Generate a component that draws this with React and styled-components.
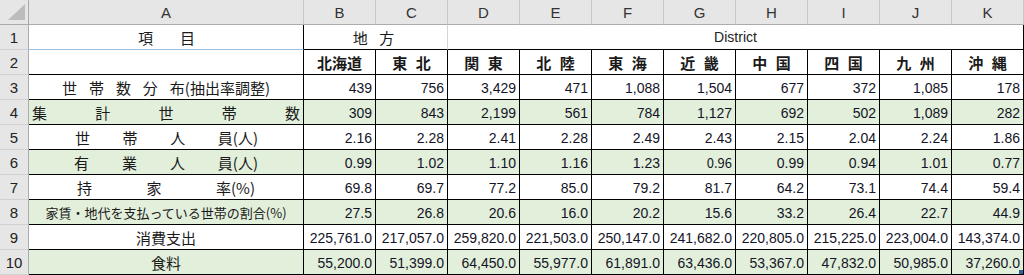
import React from 'react'
import styled, { createGlobalStyle } from 'styled-components'

const GREEN = '#e2efda'
const LINE = '#000'
const HEAD_BG = '#e6e6e6'

const GlobalStyle = createGlobalStyle`
  html, body {
    margin: 0;
    padding: 0;
    background: #fff;
  }
  * {
    box-sizing: border-box;
  }
`

const Sheet = styled.div`
  position: relative;
  display: grid;
  grid-template-columns: 29px 275px repeat(10, 72px);
  grid-template-rows: repeat(11, 25px);
  width: 1024px;
  font-family: "Noto Sans CJK JP", "Liberation Sans", sans-serif;
  color: #1a1a1a;
`

const Corner = styled.div`
  background: ${HEAD_BG};
  border-right: 1px solid #ababab;
  border-bottom: 1px solid #ababab;
  display: flex;
  align-items: flex-end;
  justify-content: flex-end;
  padding: 0 3px 4px 0;
`

const ColHead = styled.div`
  background: ${HEAD_BG};
  border-right: 1px solid #c8c8c8;
  border-bottom: 1px solid #ababab;
  display: flex;
  align-items: center;
  justify-content: center;
  font-family: "Liberation Sans", sans-serif;
  font-size: 15px;
  color: #333;
`

const RowHead = styled.div`
  background: ${HEAD_BG};
  border-right: 1px solid #ababab;
  border-bottom: 1px solid #d0d0d0;
  display: flex;
  align-items: center;
  justify-content: center;
  font-family: "Liberation Sans", sans-serif;
  font-size: 15px;
  color: #222;
`

const Cell = styled.div`
  background: ${(p) => (p.$fill ? GREEN : '#fff')};
  border-right: 1px solid ${(p) => p.$rightLine || LINE};
  border-bottom: 1px solid ${(p) => p.$bottomLine || LINE};
  grid-column: ${(p) => p.$span || 'auto'};
  display: flex;
  align-items: center;
  justify-content: ${(p) => p.$justify || 'center'};
  padding: ${(p) => p.$pad || '0'};
  font-size: ${(p) => p.$size || '15px'};
  font-weight: ${(p) => (p.$bold ? 700 : 400)};
  word-spacing: ${(p) => p.$wordGap || 'normal'};
  white-space: nowrap;
  overflow: hidden;
`

const LatinCell = styled(Cell)`
  font-family: "Liberation Sans", sans-serif;
  font-size: 14px;
  color: #222;
`

const NumCell = styled.div`
  background: ${(p) => (p.$fill ? GREEN : '#fff')};
  border-right: 1px solid ${LINE};
  border-bottom: 1px solid ${LINE};
  display: flex;
  align-items: center;
  justify-content: flex-end;
  padding: 1px 3px 0 0;
  font-family: ${(p) => (p.$alt ? '"Noto Sans CJK JP", sans-serif' : '"Liberation Sans", sans-serif')};
  font-size: ${(p) => (p.$alt ? '13px' : '14px')};
  color: #141428;
  white-space: nowrap;
`

const FillHandle = styled.div`
  position: absolute;
  right: 1px;
  bottom: 1px;
  width: 4px;
  height: 4px;
  background: #2f5f98;
`

const COLS = ['A', 'B', 'C', 'D', 'E', 'F', 'G', 'H', 'I', 'J', 'K']

const REGIONS = ['北海道', '東 北', '関 東', '北 陸', '東 海', '近 畿', '中 国', '四 国', '九 州', '沖 縄']

const ROWS = [
  {
    parts: ['世', '帯', '数', '分', '布(抽出率調整)'],
    pad: '0 33px 0 33px',
    values: ['439', '756', '3,429', '471', '1,088', '1,504', '677', '372', '1,085', '178'],
  },
  {
    parts: ['集', '計', '世', '帯', '数'],
    pad: '0 3px 0 3px',
    fill: true,
    values: ['309', '843', '2,199', '561', '784', '1,127', '692', '502', '1,089', '282'],
  },
  {
    parts: ['世', '帯', '人', '員(人)'],
    pad: '0 45px 0 46px',
    values: ['2.16', '2.28', '2.41', '2.28', '2.49', '2.43', '2.15', '2.04', '2.24', '1.86'],
  },
  {
    parts: ['有', '業', '人', '員(人)'],
    pad: '0 45px 0 45px',
    fill: true,
    values: ['0.99', '1.02', '1.10', '1.16', '1.23', '0.96', '0.99', '0.94', '1.01', '0.77'],
    alt: 5,
  },
  {
    parts: ['持', '家', '率(%)'],
    pad: '0 48px 0 48px',
    values: ['69.8', '69.7', '77.2', '85.0', '79.2', '81.7', '64.2', '73.1', '74.4', '59.4'],
  },
  {
    label: '家賃・地代を支払っている世帯の割合(%)',
    size: '13px',
    fill: true,
    values: ['27.5', '26.8', '20.6', '16.0', '20.2', '15.6', '33.2', '26.4', '22.7', '44.9'],
  },
  {
    label: '消費支出',
    values: ['225,761.0', '217,057.0', '259,820.0', '221,503.0', '250,147.0', '241,682.0', '220,805.0', '215,225.0', '223,004.0', '143,374.0'],
  },
  {
    label: '食料',
    fill: true,
    values: ['55,200.0', '51,399.0', '64,450.0', '55,977.0', '61,891.0', '63,436.0', '53,367.0', '47,832.0', '50,985.0', '37,260.0'],
  },
]

const Label = ({ row }) => {
  if (row.parts) {
    return (
      <Cell $fill={row.fill} $justify="space-between" $pad={row.pad}>
        {row.parts.map((p, i) => <span key={i}>{p}</span>)}
      </Cell>
    )
  }
  return <Cell $fill={row.fill} $size={row.size}>{row.label}</Cell>
}

const App = () => {
  return (
    <>
      <GlobalStyle />
      <Sheet>
        <Corner>
          <svg width="17" height="16" viewBox="0 0 17 16">
            <polygon points="17,0 17,16 0,16" fill="#bcbcbc" />
          </svg>
        </Corner>
        {COLS.map((c) => <ColHead key={c}>{c}</ColHead>)}

        <RowHead>1</RowHead>
        <Cell $justify="space-between" $pad="0 108px 0 109px" $bottomLine="#9bc2e6">
          <span>項</span>
          <span>目</span>
        </Cell>
        <Cell $span="span 2" $wordGap="8px" $rightLine="#d4d4d4" $pad="0 4px 0 0">地 方</Cell>
        <LatinCell $span="span 8">District</LatinCell>

        <RowHead>2</RowHead>
        <Cell />
        {REGIONS.map((r) => (
          <Cell key={r} $bold $wordGap="5px">{r}</Cell>
        ))}

        {ROWS.map((row, i) => (
          <React.Fragment key={i}>
            <RowHead>{i + 3}</RowHead>
            <Label row={row} />
            {row.values.map((v, j) => (
              <NumCell key={j} $fill={row.fill} $alt={row.alt === j}>{v}</NumCell>
            ))}
          </React.Fragment>
        ))}
        <FillHandle />
      </Sheet>
    </>
  )
}

export default App
